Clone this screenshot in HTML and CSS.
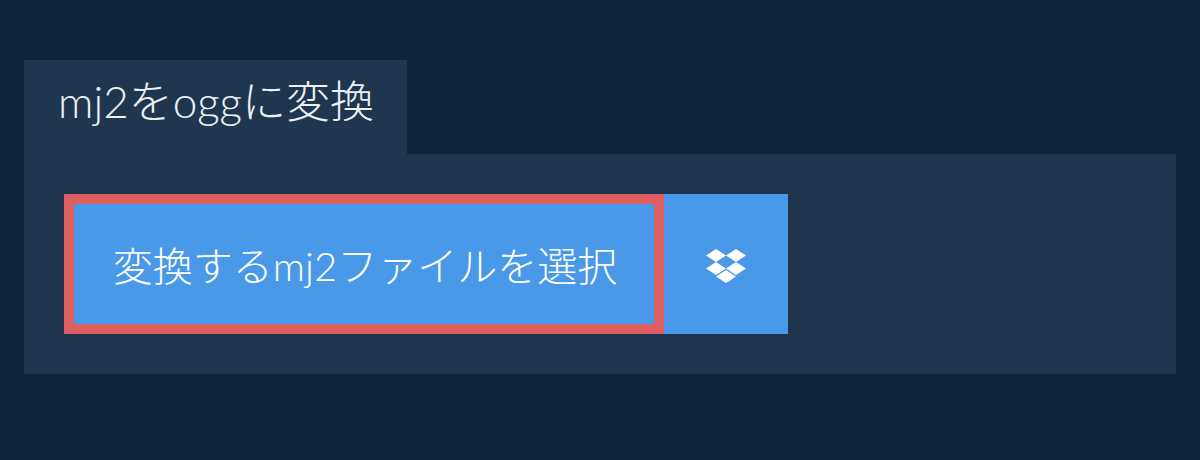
FILE: index.html
```html
<!DOCTYPE html>
<html lang="ja">
<head>
    <meta charset="UTF-8">
    <meta name="viewport" content="width=device-width, initial-scale=1.0">
    <title>mj2をoggに変換</title>
    <link rel="stylesheet" href="styles.css">
</head>
<body>
    <div class="converter">
        <h1 class="tab-title">mj2をoggに変換</h1>
        <div class="panel">
            <button class="btn-select">変換するmj2ファイルを選択</button>
            <button class="btn-dropbox" aria-label="Dropbox">
                <svg width="40" height="34" viewBox="0 0 40 34">
                    <path fill="#fff" d="M10 0 0 6.500 10 13l10-6.500zM30 0 20 6.500 30 13l10-6.500zM10 13 0 19.500 10 26l10-6.500zM30 13l-10 6.500L30 26l10-6.500zM20 21 10 27.500 20 34l10-6.500z"/>
                </svg>
            </button>
        </div>
    </div>
</body>
</html>
```

FILE: styles.css
```css
* {
    box-sizing: border-box;
}

body {
    margin: 0;
    height: 460px;
    background-color: #0f2438;
    font-family: "Lato", "Noto Sans CJK JP", sans-serif;
    font-weight: 300;
    overflow: hidden;
}

.converter {
    padding: 60px 24px 0 24px;
}

.tab-title {
    display: block;
    width: 383px;
    height: 94px;
    margin: 0;
    padding-left: 34px;
    background-color: #20364f;
    color: #edf0f3;
    font-size: 44px;
    font-weight: 300;
    line-height: 83px;
}

.panel {
    display: flex;
    height: 220px;
    padding: 40px;
    background-color: #20364f;
}

.btn-select {
    width: 600px;
    height: 140px;
    padding: 0 0 0 2px;
    background-color: #4a99e9;
    border: 10px solid #dd5f5f;
    color: white;
    font-family: inherit;
    font-size: 40px;
    font-weight: 300;
}

.btn-dropbox {
    display: flex;
    justify-content: center;
    align-items: center;
    width: 124px;
    height: 140px;
    padding: 4px 0 0 0;
    background-color: #4a99e9;
    border: none;
}
```
